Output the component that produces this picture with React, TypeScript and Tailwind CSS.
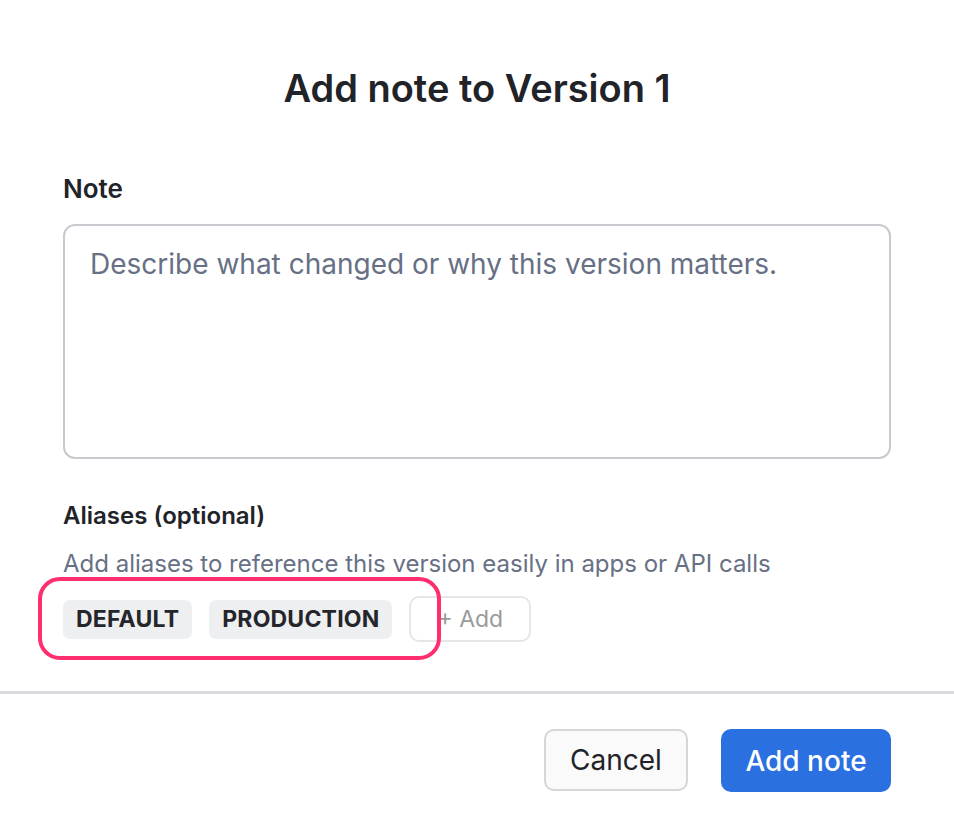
import React from "react";

const aliases = ["DEFAULT", "PRODUCTION"];

export default function App() {
  return (
    <div
      className="flex min-h-screen w-full flex-col bg-white text-[#212328]"
      style={{ fontFamily: "Inter, 'Noto Sans', sans-serif" }}
    >
      <div className="px-[63px] pt-[65px]">
        <h1 className="text-center text-[38px] font-semibold leading-[46px]">
          Add note to Version 1
        </h1>

        <label className="mt-[62px] block text-[26px] font-semibold leading-[32px]">Note</label>
        <textarea
          className="mt-[19px] block h-[235px] w-full resize-none rounded-[12px] border-2 border-[#c7cacf] px-[25px] py-[19px] text-[28px] leading-[38px] text-[#212328] outline-none placeholder:text-[#677084]"
          placeholder="Describe what changed or why this version matters."
        />

        <div className="mt-[41px] text-[24px] font-semibold leading-[32px]">Aliases (optional)</div>
        <p className="mt-[16px] text-[24px] leading-[32px] text-[#677084]">
          Add aliases to reference this version easily in apps or API calls
        </p>

        <div className="relative mt-[16px] flex items-center gap-[17px]">
          {aliases.map((a) => (
            <span
              key={a}
              className="flex h-[39px] items-center rounded-[7px] bg-[#eeeff1] px-[13px] text-[23px] font-bold tracking-[0.2px] text-[#24262b]"
            >
              {a}
            </span>
          ))}
          <button className="flex h-[46px] items-center rounded-[10px] border-2 border-[#e5e6e9] bg-white px-[26px] text-[23px] text-[#9a9a9a]">
            + Add
          </button>
          {/* highlight ring over the alias chips */}
          <div className="pointer-events-none absolute left-[-25px] top-[-19px] h-[83px] w-[403px] rounded-[22px] border-[4px] border-[#ff2e6e]" />
        </div>
      </div>

      <div className="mt-[49px] h-[3px] w-full bg-[#d9dade]" />

      <div className="flex justify-end gap-[33px] px-[63px] pt-[35px]">
        <button className="h-[62px] w-[144px] rounded-[10px] border-2 border-[#d5d6da] bg-[#fafafa] text-[28px] text-[#212328]">
          Cancel
        </button>
        <button className="h-[63px] w-[170px] rounded-[10px] bg-[#2a70e0] text-[28px] font-medium text-white">
          Add note
        </button>
      </div>
    </div>
  );
}
